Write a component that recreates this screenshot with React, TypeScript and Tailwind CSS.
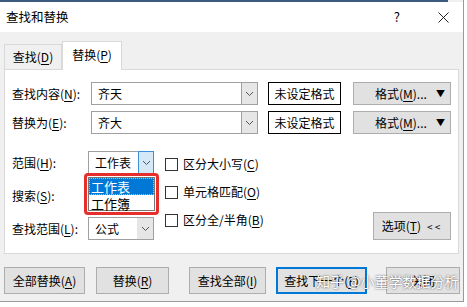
import React from "react";

const font = "font-['Microsoft_YaHei','Noto_Sans_CJK_SC',sans-serif]";

function Mn({ k }: { k: string }) {
  return <span className="underline underline-offset-2">{k}</span>;
}

function Arrow() {
  return (
    <svg width="9" height="6" viewBox="0 0 9 6">
      <path d="M1 1 L4.5 4.5 L8 1" fill="none" stroke="#555" strokeWidth="1" />
    </svg>
  );
}

function Combo({ text, w, arrowClass }: { text: string; w: string; arrowClass: string }) {
  return (
    <div className={`flex h-[23px] ${w} border border-[#a0a0a0] bg-white`}>
      <div className="flex-1 pl-[6px] leading-[21px]">{text}</div>
      <div className={`flex w-[16px] items-center justify-center ${arrowClass}`}>
        <Arrow />
      </div>
    </div>
  );
}

function Check({ label }: { label: React.ReactNode }) {
  return (
    <div className="flex items-center gap-[5px]">
      <div className="h-[13px] w-[13px] border border-[#333] bg-white" />
      <span>{label}</span>
    </div>
  );
}

function Btn({ children, w, focus }: { children: React.ReactNode; w: string; focus?: boolean }) {
  return (
    <div
      className={`flex h-[27px] ${w} items-center justify-center bg-[#e1e1e1] ${
        focus ? "border-2 border-[#0078d7]" : "border border-[#adadad]"
      }`}
    >
      {children}
    </div>
  );
}

export default function App() {
  return (
    <div className={`relative h-[307px] w-[467px] overflow-hidden bg-white text-[12px] text-black ${font}`}>
      <div className="flex h-[302px] w-[464px] flex-col border-r border-b border-[#9a9a9a] bg-[#f0f0f0]">
        {/* title bar */}
        <div className="h-[2px] w-[448px] bg-[#3d5a80]" />
        <div className="flex h-[30px] items-center bg-white pl-[6px] pr-[14px] text-[12.5px]">
          <span className="flex-1">查找和替换</span>
          <span className="mr-[38px] text-[13px]">?</span>
          <svg width="11" height="11" viewBox="0 0 11 11">
            <path d="M0.5 0.5 L10.5 10.5 M10.5 0.5 L0.5 10.5" stroke="#222" strokeWidth="1" />
          </svg>
        </div>

        {/* tabs */}
        <div className="mt-[9px] flex h-[28px] items-end pl-[4px]">
          <div className="flex h-[25px] w-[58px] items-center justify-center border border-b-0 border-[#d9d9d9] bg-[#f0f0f0]">
            查找(<Mn k="D" />)
          </div>
          <div className="relative z-10 -mb-px flex h-[29px] w-[60px] items-center justify-center border border-b-0 border-[#d9d9d9] bg-white pb-[3px]">
            替换(<Mn k="P" />)
          </div>
        </div>

        {/* panel */}
        <div className="relative ml-[4px] flex h-[185px] w-[455px] flex-col border border-[#d9d9d9] bg-white pt-[12px] pl-[7px]">
          <div className="flex h-[23px] items-center">
            <span className="w-[79px]">查找内容(<Mn k="N" />):</span>
            <Combo text="齐天" w="w-[167px]" arrowClass="border-l border-[#a0a0a0] bg-[#e6e6e6]" />
            <div className="ml-[10px] flex h-[23px] w-[73px] items-center justify-center border border-black">未设定格式</div>
            <div className="ml-[12px] flex h-[23px] w-[98px] items-center border border-[#adadad] bg-[#e1e1e1] pl-[21px]">
              <span className="flex-1">格式(<Mn k="M" />)...</span>
              <span className="mr-[5px] text-[9px]">▼</span>
            </div>
          </div>
          <div className="mt-[6px] flex h-[23px] items-center">
            <span className="w-[79px]">替换为(<Mn k="E" />):</span>
            <Combo text="齐大" w="w-[167px]" arrowClass="border-l border-[#a0a0a0] bg-[#e6e6e6]" />
            <div className="ml-[10px] flex h-[23px] w-[73px] items-center justify-center border border-black">未设定格式</div>
            <div className="ml-[12px] flex h-[23px] w-[98px] items-center border border-[#adadad] bg-[#e1e1e1] pl-[21px]">
              <span className="flex-1">格式(<Mn k="M" />)...</span>
              <span className="mr-[5px] text-[9px]">▼</span>
            </div>
          </div>

          <div className="mt-[17px] flex">
            <div className="flex flex-col gap-[10px]">
              <div className="flex h-[23px] items-center">
                <span className="w-[76px]">范围(<Mn k="H" />):</span>
                <Combo text="工作表" w="w-[66px]" arrowClass="border border-[#3c8fd8] -my-px -mr-px bg-[#d5e8f8]" />
              </div>
              <div className="flex h-[23px] items-center">
                <span className="w-[76px]">搜索(<Mn k="S" />):</span>
                <Combo text="按行" w="w-[66px]" arrowClass="bg-[#e6e6e6]" />
              </div>
              <div className="flex h-[23px] items-center">
                <span className="w-[76px]">查找范围(<Mn k="L" />):</span>
                <Combo text="公式" w="w-[66px]" arrowClass="bg-[#e6e6e6]" />
              </div>
            </div>
            <div className="ml-[11px] mt-[4px] flex flex-col gap-[10px]">
              <Check label={<>区分大小写(<Mn k="C" />)</>} />
              <Check label={<>单元格匹配(<Mn k="O" />)</>} />
              <Check label={<>区分全/半角(<Mn k="B" />)</>} />
            </div>
            <div className="ml-auto mr-[7px] flex items-end">
              <div className="flex h-[28px] w-[78px] items-center justify-center gap-[6px] border border-[#adadad] bg-[#e1e1e1]">
                <span>选项(<Mn k="T" />)</span>
                <span className="text-[10px] tracking-[2px]">&lt;&lt;</span>
              </div>
            </div>
          </div>

          {/* open dropdown list */}
          <div className="absolute top-[103px] left-[79px] z-20 h-[42px] w-[75px] rounded-[4px] border-[3px] border-[#e62e2b] p-[1px]">
            <div className="h-full w-full border border-[#777] bg-white text-[13px]">
              <div className="h-[17px] border border-dotted border-[#9cc4ee] bg-[#0078d7] pl-[1px] leading-[15px] text-white">工作表</div>
              <div className="h-[17px] pl-[2px] leading-[17px]">工作簿</div>
            </div>
          </div>
        </div>

        {/* bottom buttons */}
        <div className="relative mt-[13px] flex pl-[4px]">
          <Btn w="w-[81px]">全部替换(<Mn k="A" />)</Btn>
          <div className="ml-[11px]">
            <Btn w="w-[73px]">替换(<Mn k="R" />)</Btn>
          </div>
          <div className="ml-[20px]">
            <Btn w="w-[77px]">查找全部(<Mn k="I" />)</Btn>
          </div>
          <div className="ml-[10px]">
            <Btn w="w-[91px]" focus>查找下一个(<Mn k="F" />)</Btn>
          </div>
          <div className="ml-[19px]">
            <Btn w="w-[74px]">关闭</Btn>
          </div>
          <div className="absolute top-[4px] left-[316px] whitespace-nowrap text-[14px] text-white [text-shadow:0_0_2px_rgba(0,0,0,0.75)]">
            知乎 @小董学数据分析
          </div>
        </div>
      </div>
    </div>
  );
}
